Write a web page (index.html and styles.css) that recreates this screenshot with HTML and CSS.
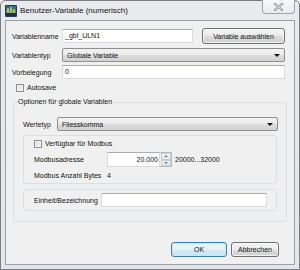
FILE: index.html
```html
<!DOCTYPE html>
<html lang="de">
<head>
<meta charset="utf-8">
<title>Benutzer-Variable (numerisch)</title>
<link rel="stylesheet" href="styles.css">
</head>
<body>
<div class="window">
  <div class="titlebar">
    <svg class="appicon" width="12" height="12" viewBox="0 0 12 12">
      <rect x="0" y="0" width="12" height="12" rx="1" fill="#1d3f66"/>
      <rect x="1" y="1" width="10" height="7" fill="#2e6f8f"/>
      <path d="M2 8 L3 3 L4 8 M5 8 L6 2 L7 8 M8 8 L9 4 L10 8" fill="none" stroke="#c8d84a" stroke-width="1"/>
      <rect x="1" y="8" width="10" height="3" fill="#203040"/>
    </svg>
    <span class="title">Benutzer-Variable (numerisch)</span>
    <div class="close">
      <svg width="9" height="8" viewBox="0 0 9 8">
        <path d="M1 1 L8 7 M8 1 L1 7" stroke="#8a8f96" stroke-width="2.2" stroke-linecap="square"/>
        <path d="M1 1 L8 7 M8 1 L1 7" stroke="#f4f5f7" stroke-width="0.8"/>
      </svg>
    </div>
  </div>
  <div class="client">
    <div class="row r-name">
      <span class="lbl lbl-main">Variablenname</span>
      <div class="field f-name">_gbl_ULN1</div>
      <div class="btn btn-pick">Variable auswählen</div>
    </div>
    <div class="row r-type">
      <span class="lbl lbl-main">Variablentyp</span>
      <div class="combo c-type">Globale Variable<i class="arrow"></i></div>
    </div>
    <div class="row r-init">
      <span class="lbl lbl-main">Vorbelegung</span>
      <div class="field f-init">0</div>
    </div>
    <div class="check c-autosave"><span class="box"></span><span>Autosave</span></div>
    <fieldset class="group">
      <legend>Optionen für globale Variablen</legend>
      <div class="row r-wert">
        <span class="lbl lbl-wert">Wertetyp</span>
        <div class="combo c-wert">Fliesskomma<i class="arrow"></i></div>
      </div>
      <div class="subbox modbus">
        <div class="check c-modbus"><span class="box"></span><span>Verfügbar für Modbus</span></div>
        <div class="row r-addr">
          <span class="lbl lbl-addr">Modbusadresse</span>
          <div class="field f-addr">20.000</div>
          <div class="spinner"><span class="up"></span><span class="down"></span></div>
          <span class="range">20000...32000</span>
        </div>
        <div class="row r-bytes">
          <span class="lbl lbl-addr">Modbus Anzahl Bytes</span>
          <span>4</span>
        </div>
      </div>
      <div class="subbox unit">
        <span class="lbl lbl-unit">Einheit/Bezeichnung</span>
        <div class="field f-unit"></div>
      </div>
    </fieldset>
    <div class="buttons">
      <div class="btn btn-ok">OK</div>
      <div class="btn btn-cancel">Abbrechen</div>
    </div>
  </div>
</div>
</body>
</html>
```

FILE: styles.css
```css
* { box-sizing: border-box; }
html, body { margin: 0; padding: 0; }
body {
  width: 300px;
  height: 270px;
  background: #ffffff;
  font-family: "Liberation Sans", Arial, sans-serif;
  font-size: 7px;
  color: #111;
}
.window {
  width: 300px;
  height: 270px;
  border: 1px solid #7a7e84;
  border-radius: 5px 5px 0 0;
  background: linear-gradient(#e8eaed, #e4e6e9);
  padding: 0 4px 4px;
  display: flex;
  flex-direction: column;
}
.titlebar {
  height: 19px;
  display: flex;
  align-items: flex-start;
}
.appicon { margin-top: 4px; flex: none; }
.title {
  margin-left: 3px;
  line-height: 19px;
  font-size: 8px;
  color: #111;
}
.close {
  margin-left: auto;
  margin-top: -1px;
  width: 33px;
  height: 14px;
  border: 1px solid #9ea3aa;
  border-top: none;
  border-radius: 0 0 4px 4px;
  background: linear-gradient(#f7f8f9, #e9ecef);
  display: flex;
  align-items: center;
  justify-content: center;
}
.client {
  flex: 1;
  border: 1px solid #9aa0a6;
  background: #f0f0f0;
  padding: 7px 7px 0 6px;
  display: flex;
  flex-direction: column;
}
.row { display: flex; align-items: center; }
.lbl { flex: none; white-space: nowrap; }
.lbl-main { width: 50px; }
.r-name { height: 16px; }
.r-type { height: 14px; margin-top: 4px; }
.r-init { height: 14px; margin-top: 3px; }
.field {
  height: 14px;
  background: #fff;
  border: 1px solid #d9dde3;
  border-top-color: #abadb3;
  padding-left: 2px;
  line-height: 12px;
  white-space: nowrap;
}
.f-name { width: 131px; }
.f-init { width: 223px; }
.btn {
  height: 16px;
  border: 1px solid #707070;
  border-radius: 3px;
  background: linear-gradient(#f2f2f2 0%, #ebebeb 50%, #dddddd 51%, #cfcfcf 100%);
  box-shadow: inset 0 0 0 1px rgba(255,255,255,0.7);
  display: flex;
  align-items: center;
  justify-content: center;
  white-space: nowrap;
}
.btn-pick { width: 83px; margin-left: 9px; }
.combo {
  height: 14px;
  border: 1px solid #8e8f8f;
  border-radius: 2px;
  background: linear-gradient(#f2f2f2 0%, #ebebeb 50%, #dddddd 51%, #d2d2d2 100%);
  padding-left: 4px;
  display: flex;
  align-items: center;
  white-space: nowrap;
}
.c-type { width: 223px; }
.arrow {
  margin-left: auto;
  margin-right: 4px;
  width: 0;
  height: 0;
  border-left: 3px solid transparent;
  border-right: 3px solid transparent;
  border-top: 3px solid #111;
}
.check { display: flex; align-items: center; height: 9px; }
.box {
  width: 8px;
  height: 8px;
  border: 1px solid #8f8f8f;
  background: linear-gradient(135deg, #dcdcdc, #f6f6f6);
  box-shadow: inset 0 0 0 1px #f4f4f4;
  margin-right: 3px;
  flex: none;
}
.c-autosave { margin-top: 4px; margin-left: 4px; }
.group {
  margin: 5px 0 0 1px;
  padding: 0 8px 10px 9px;
  border: 1px solid #d5dfe5;
  border-radius: 3px;
  min-width: 0;
}
.group legend {
  margin-left: -6px;
  padding: 0 1px;
  line-height: 10px;
}
.r-wert { height: 14px; margin-top: 10px; }
.lbl-wert { width: 34px; }
.c-wert { width: 221px; }
.subbox {
  border: 1px solid #d5dfe5;
  border-radius: 3px;
  width: 254px;
}
.modbus {
  margin-top: 4px;
  padding: 3px 0 3px 10px;
}
.r-addr { height: 15px; margin-top: 4px; }
.lbl-addr { width: 73px; }
.f-addr {
  width: 53px;
  height: 15px;
  text-align: right;
  padding-right: 1px;
  line-height: 13px;
}
.spinner {
  width: 12px;
  height: 15px;
  display: flex;
  flex-direction: column;
  border: 1px solid #b8bcc2;
  border-left: none;
  background: #f3f3f3;
}
.spinner span {
  flex: 1;
  display: flex;
  align-items: center;
  justify-content: center;
  background: linear-gradient(#f7f7f7, #e4e6e8);
  border: 1px solid #c9ccd0;
  margin: 0 0 0 1px;
}
.spinner .up::before {
  content: "";
  border-left: 2px solid transparent;
  border-right: 2px solid transparent;
  border-bottom: 2px solid #6b7f99;
}
.spinner .down::before {
  content: "";
  border-left: 2px solid transparent;
  border-right: 2px solid transparent;
  border-top: 2px solid #6b7f99;
}
.range { margin-left: 3px; }
.r-bytes { height: 10px; margin-top: 3px; }
.unit {
  margin-top: 5px;
  height: 22px;
  padding-left: 10px;
  display: flex;
  align-items: center;
}
.lbl-unit { width: 67px; }
.f-unit { width: 166px; }
.buttons {
  display: flex;
  justify-content: flex-end;
  gap: 4px;
  margin-top: 20px;
  margin-right: 8px;
}
.buttons .btn { height: 15px; }
.btn-ok {
  width: 56px;
  border-color: #3c7fb1;
  box-shadow: inset 0 0 0 1px #c8e6f7;
  background: linear-gradient(#eef6fb 0%, #e4f0f8 50%, #d6e8f4 51%, #cde3f1 100%);
}
.btn-cancel { width: 48px; }
```
